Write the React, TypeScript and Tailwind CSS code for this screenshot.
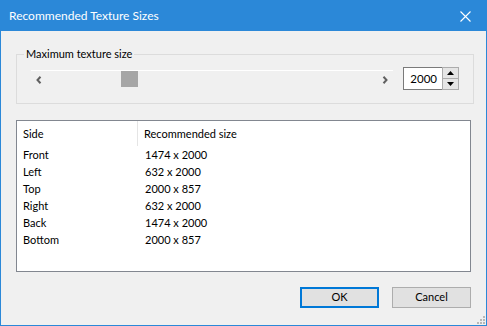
import React from "react";

const rows: [string, string][] = [
  ["Front", "1474 x 2000"],
  ["Left", "632 x 2000"],
  ["Top", "2000 x 857"],
  ["Right", "632 x 2000"],
  ["Back", "1474 x 2000"],
  ["Bottom", "2000 x 857"],
];

export default function App() {
  return (
    <div
      className="w-[487px] h-[326px] border border-[#2b88d8] bg-[#f0f0f0] flex flex-col text-[11px] text-black overflow-hidden"
      style={{ fontFamily: 'Lato, "Noto Sans", sans-serif' }}
    >
      {/* Title bar */}
      <div className="h-[30px] bg-[#2b88d8] flex items-center justify-between pl-[8px] pr-[15px] shrink-0">
        <span className="text-white text-[12px] leading-none">Recommended Texture Sizes</span>
        <svg width="11" height="11" viewBox="0 0 11 11">
          <path d="M0.5 0.5 L10.5 10.5 M10.5 0.5 L0.5 10.5" stroke="white" strokeWidth="1.1" />
        </svg>
      </div>

      {/* Body */}
      <div className="flex-1 flex flex-col px-[15px] relative">
        <fieldset className="mt-[15px] border border-[#dcdcdc] h-[58px] px-[14px] pb-[0px]">
          <legend className="ml-[-7px] px-[2px] leading-[16px]">Maximum texture size</legend>
          <div className="flex items-start mt-[8px]">
            {/* scrollbar */}
            <div className="w-[362px] h-[18px] border-t border-white flex items-center justify-between px-[5px] relative">
              <svg width="6" height="8" viewBox="0 0 6 8">
                <path d="M4.5 0.8 L1.5 4 L4.5 7.2" stroke="#606060" strokeWidth="2" fill="none" />
              </svg>
              <div className="absolute left-[90px] top-0 w-[17px] h-[16px] bg-[#a6a6a6]" />
              <svg width="6" height="8" viewBox="0 0 6 8">
                <path d="M1.5 0.8 L4.5 4 L1.5 7.2" stroke="#606060" strokeWidth="2" fill="none" />
              </svg>
            </div>
            {/* spin box */}
            <div className="ml-[10px] mt-[-3px] flex h-[23px]">
              <div className="w-[39px] h-full border border-r-0 border-[#7a7a7a] bg-white flex items-center justify-end pr-[5px] text-[11.5px]">
                2000
              </div>
              <div className="w-[17px] h-full border border-[#acacac] flex flex-col bg-[#f0f0f0]">
                <div className="flex-1 border-b border-[#acacac] bg-[#e5e5e5] flex items-center justify-center">
                  <svg width="7" height="4" viewBox="0 0 7 4">
                    <path d="M0 4 L3.5 0 L7 4 Z" fill="#000" />
                  </svg>
                </div>
                <div className="flex-1 bg-[#e5e5e5] flex items-center justify-center">
                  <svg width="7" height="4" viewBox="0 0 7 4">
                    <path d="M0 0 L3.5 4 L7 0 Z" fill="#000" />
                  </svg>
                </div>
              </div>
            </div>
          </div>
        </fieldset>

        {/* List view */}
        <div className="mt-[16px] h-[152px] border border-[#828790] bg-white">
          <div className="flex h-[25px]">
            <div className="w-[121px] h-full border-r border-[#e5e5e5] pl-[6px] pt-[2px] flex items-center">Side</div>
            <div className="pl-[6px] pt-[2px] flex items-center">Recommended size</div>
          </div>
          <div className="mt-[1px]">
            {rows.map(([s, r]) => (
              <div key={s} className="flex h-[17px] items-center">
                <div className="w-[121px] pl-[6px]">{s}</div>
                <div className="pl-[7px]">{r}</div>
              </div>
            ))}
          </div>
        </div>

        {/* Buttons */}
        <div className="flex justify-end gap-[13px] mt-[15px]">
          <button className="w-[79px] h-[21px] border-2 border-[#0078d7] bg-[#e1e1e1] flex items-center justify-center">
            OK
          </button>
          <button className="w-[79px] h-[21px] border border-[#adadad] bg-[#e1e1e1] flex items-center justify-center">
            Cancel
          </button>
        </div>

        {/* resize grip */}
        <svg className="absolute right-[1px] bottom-[1px]" width="8" height="8" viewBox="0 0 8 8">
          <rect x="6" y="0" width="2" height="2" fill="#b8b8b8" />
          <rect x="3" y="3" width="2" height="2" fill="#b8b8b8" />
          <rect x="6" y="3" width="2" height="2" fill="#b8b8b8" />
          <rect x="0" y="6" width="2" height="2" fill="#b8b8b8" />
          <rect x="3" y="6" width="2" height="2" fill="#b8b8b8" />
          <rect x="6" y="6" width="2" height="2" fill="#b8b8b8" />
        </svg>
      </div>
    </div>
  );
}
